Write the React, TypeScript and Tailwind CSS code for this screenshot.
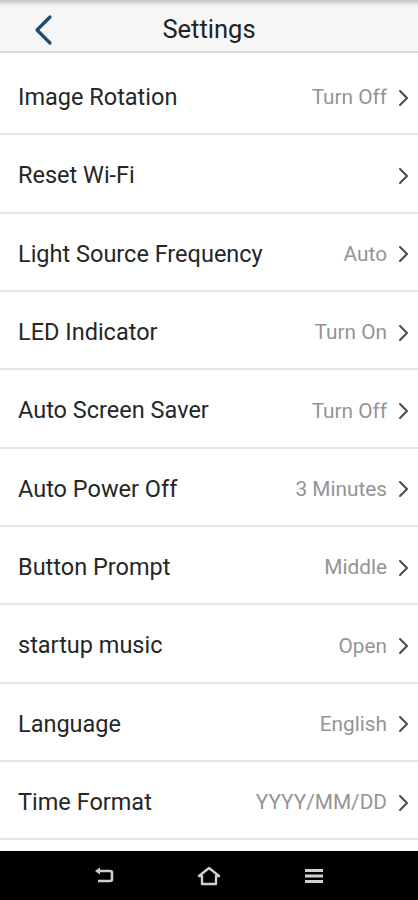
import React from "react";

const rows: { label: string; value?: string }[] = [
  { label: "Image Rotation", value: "Turn Off" },
  { label: "Reset Wi-Fi" },
  { label: "Light Source Frequency", value: "Auto" },
  { label: "LED Indicator", value: "Turn On" },
  { label: "Auto Screen Saver", value: "Turn Off" },
  { label: "Auto Power Off", value: "3 Minutes" },
  { label: "Button Prompt", value: "Middle" },
  { label: "startup music", value: "Open" },
  { label: "Language", value: "English" },
  { label: "Time Format", value: "YYYY/MM/DD" },
];

const Chevron = () => (
  <svg width="12" height="18" viewBox="0 0 12 18" className="shrink-0">
    <path d="M3 2l7 7-7 7" fill="none" stroke="#4a4a4a" strokeWidth="2" strokeLinecap="round" strokeLinejoin="round" />
  </svg>
);

const App: React.FC = () => {
  return (
    <div className="w-[418px] h-[900px] flex flex-col bg-white overflow-hidden" style={{ fontFamily: "Roboto, 'Noto Sans', sans-serif" }}>
      {/* header */}
      <div className="h-[6px] bg-gradient-to-b from-[#c4c4c4] to-[#f3f3f3]" />
      <div className="h-[47px] bg-[#f6f6f6] flex items-center relative border-b-2 border-[#dadada]">
        <button className="absolute left-[28px] top-[4px] p-1">
          <svg width="22" height="32" viewBox="0 0 22 32">
            <path d="M18 3L5 16l13 13" fill="none" stroke="#1f4b6e" strokeWidth="3.2" strokeLinecap="round" strokeLinejoin="round" />
          </svg>
        </button>
        <h1 className="flex-1 text-center text-[25.5px] text-[#222] leading-none pt-[2px]">Settings</h1>
      </div>
      <div className="h-[4px] bg-white" />

      {/* list */}
      <div className="flex flex-col">
        {rows.map((r) => (
          <div key={r.label} className="h-[78.33px] box-border border-b-2 border-[#e6e6e6] flex items-center pl-[18px] pr-[9px] pt-[5px]">
            <span className="flex-1 text-[23.5px] text-[#262626] leading-none">{r.label}</span>
            {r.value && <span className="text-[20.8px] text-[#949494] mr-[10px] leading-none">{r.value}</span>}
            <Chevron />
          </div>
        ))}
      </div>
      <div className="flex-1 bg-white" />

      {/* android nav bar */}
      <div className="h-[49px] bg-black flex items-center justify-center">
        <div className="w-[105px] flex justify-center pl-[2px]">
          <svg width="22" height="18" viewBox="0 0 22 18">
            <path d="M3 4h13a2 2 0 0 1 2 2v6a2 2 0 0 1-2 2H4" fill="none" stroke="#cfcfcf" strokeWidth="2.6" />
            <path d="M1 4l5-3.5v7z" fill="#cfcfcf" />
          </svg>
        </div>
        <div className="w-[105px] flex justify-center">
          <svg width="24" height="20" viewBox="0 0 24 20">
            <path d="M12 2L2 10h3v8h14v-8h3z" fill="none" stroke="#cfcfcf" strokeWidth="2.4" strokeLinejoin="round" />
          </svg>
        </div>
        <div className="w-[105px] flex justify-center">
          <svg width="20" height="18" viewBox="0 0 20 18">
            <rect x="1" y="2" width="18" height="3" fill="#cfcfcf" />
            <rect x="1" y="7.5" width="18" height="3" fill="#cfcfcf" />
            <rect x="1" y="13" width="18" height="3" fill="#cfcfcf" />
          </svg>
        </div>
      </div>
    </div>
  );
};

export default App;
